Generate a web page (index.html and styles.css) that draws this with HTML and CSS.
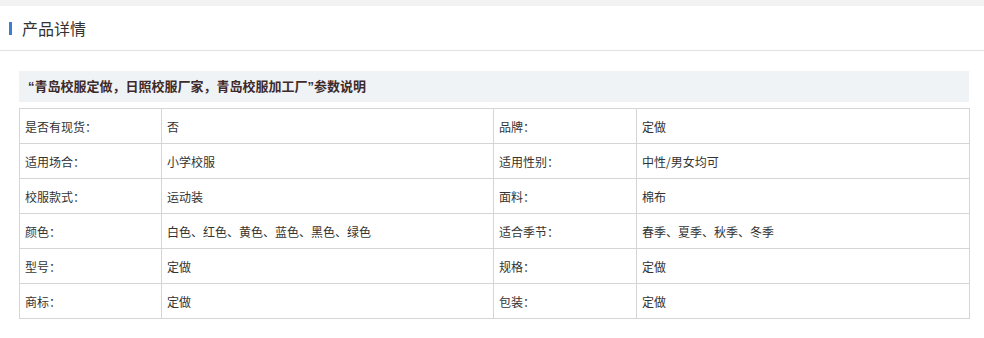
FILE: index.html
```html
<!DOCTYPE html>
<html lang="zh-CN">
<head>
<meta charset="utf-8">
<title>产品详情</title>
<link rel="stylesheet" href="styles.css">
</head>
<body>
<div class="topbar"></div>
<div class="header"><span class="mark"></span><h2 class="header-title">产品详情</h2></div>
<div class="content">
  <div class="params-title">“青岛校服定做，日照校服厂家，青岛校服加工厂”参数说明</div>
  <table class="params">
    <colgroup><col class="c1"><col class="c2"><col class="c3"><col class="c4"></colgroup>
    <tr><td>是否有现货：</td><td>否</td><td>品牌：</td><td>定做</td></tr>
    <tr><td>适用场合：</td><td>小学校服</td><td>适用性别：</td><td>中性/男女均可</td></tr>
    <tr><td>校服款式：</td><td>运动装</td><td>面料：</td><td>棉布</td></tr>
    <tr><td>颜色：</td><td>白色、红色、黄色、蓝色、黑色、绿色</td><td>适合季节：</td><td>春季、夏季、秋季、冬季</td></tr>
    <tr><td>型号：</td><td>定做</td><td>规格：</td><td>定做</td></tr>
    <tr><td>商标：</td><td>定做</td><td>包装：</td><td>定做</td></tr>
  </table>
</div>
</body>
</html>
```
FILE: styles.css
```css
html, body {
  margin: 0;
  padding: 0;
  background: #fff;
  font-family: "Noto Sans CJK SC", "Noto Sans", sans-serif;
  color: #333;
}
.topbar {
  height: 6px;
  background: #f2f2f2;
}
.header {
  height: 44px;
  border-bottom: 1px solid #e2e2e2;
  display: flex;
  align-items: center;
  padding-left: 9px;
}
.mark {
  width: 3px;
  height: 13px;
  background: #3c7fd0;
  margin-right: 10px;
}
.header-title {
  margin: 0;
  font-size: 16px;
  font-weight: normal;
  color: #333;
  line-height: 20px;
}
.content {
  padding: 20px 15px 0 19px;
}
.params-title {
  height: 31px;
  line-height: 31px;
  background: #eff3f6;
  padding-left: 9px;
  font-family: "Liberation Sans", "Noto Sans CJK SC", sans-serif;
  font-size: 13px;
  font-weight: bold;
  color: #3f2a2a;
}
.params {
  margin-top: 6px;
  width: 950px;
  border-collapse: collapse;
  table-layout: fixed;
  font-size: 12px;
}
.params .c1 { width: 142px; }
.params .c2 { width: 332px; }
.params .c3 { width: 143px; }
.params .c4 { width: 333px; }
.params td {
  border: 1px solid #d5d5d5;
  height: 35px;
  padding: 0 5px;
  box-sizing: border-box;
  color: #333;
  vertical-align: middle;
}
```
